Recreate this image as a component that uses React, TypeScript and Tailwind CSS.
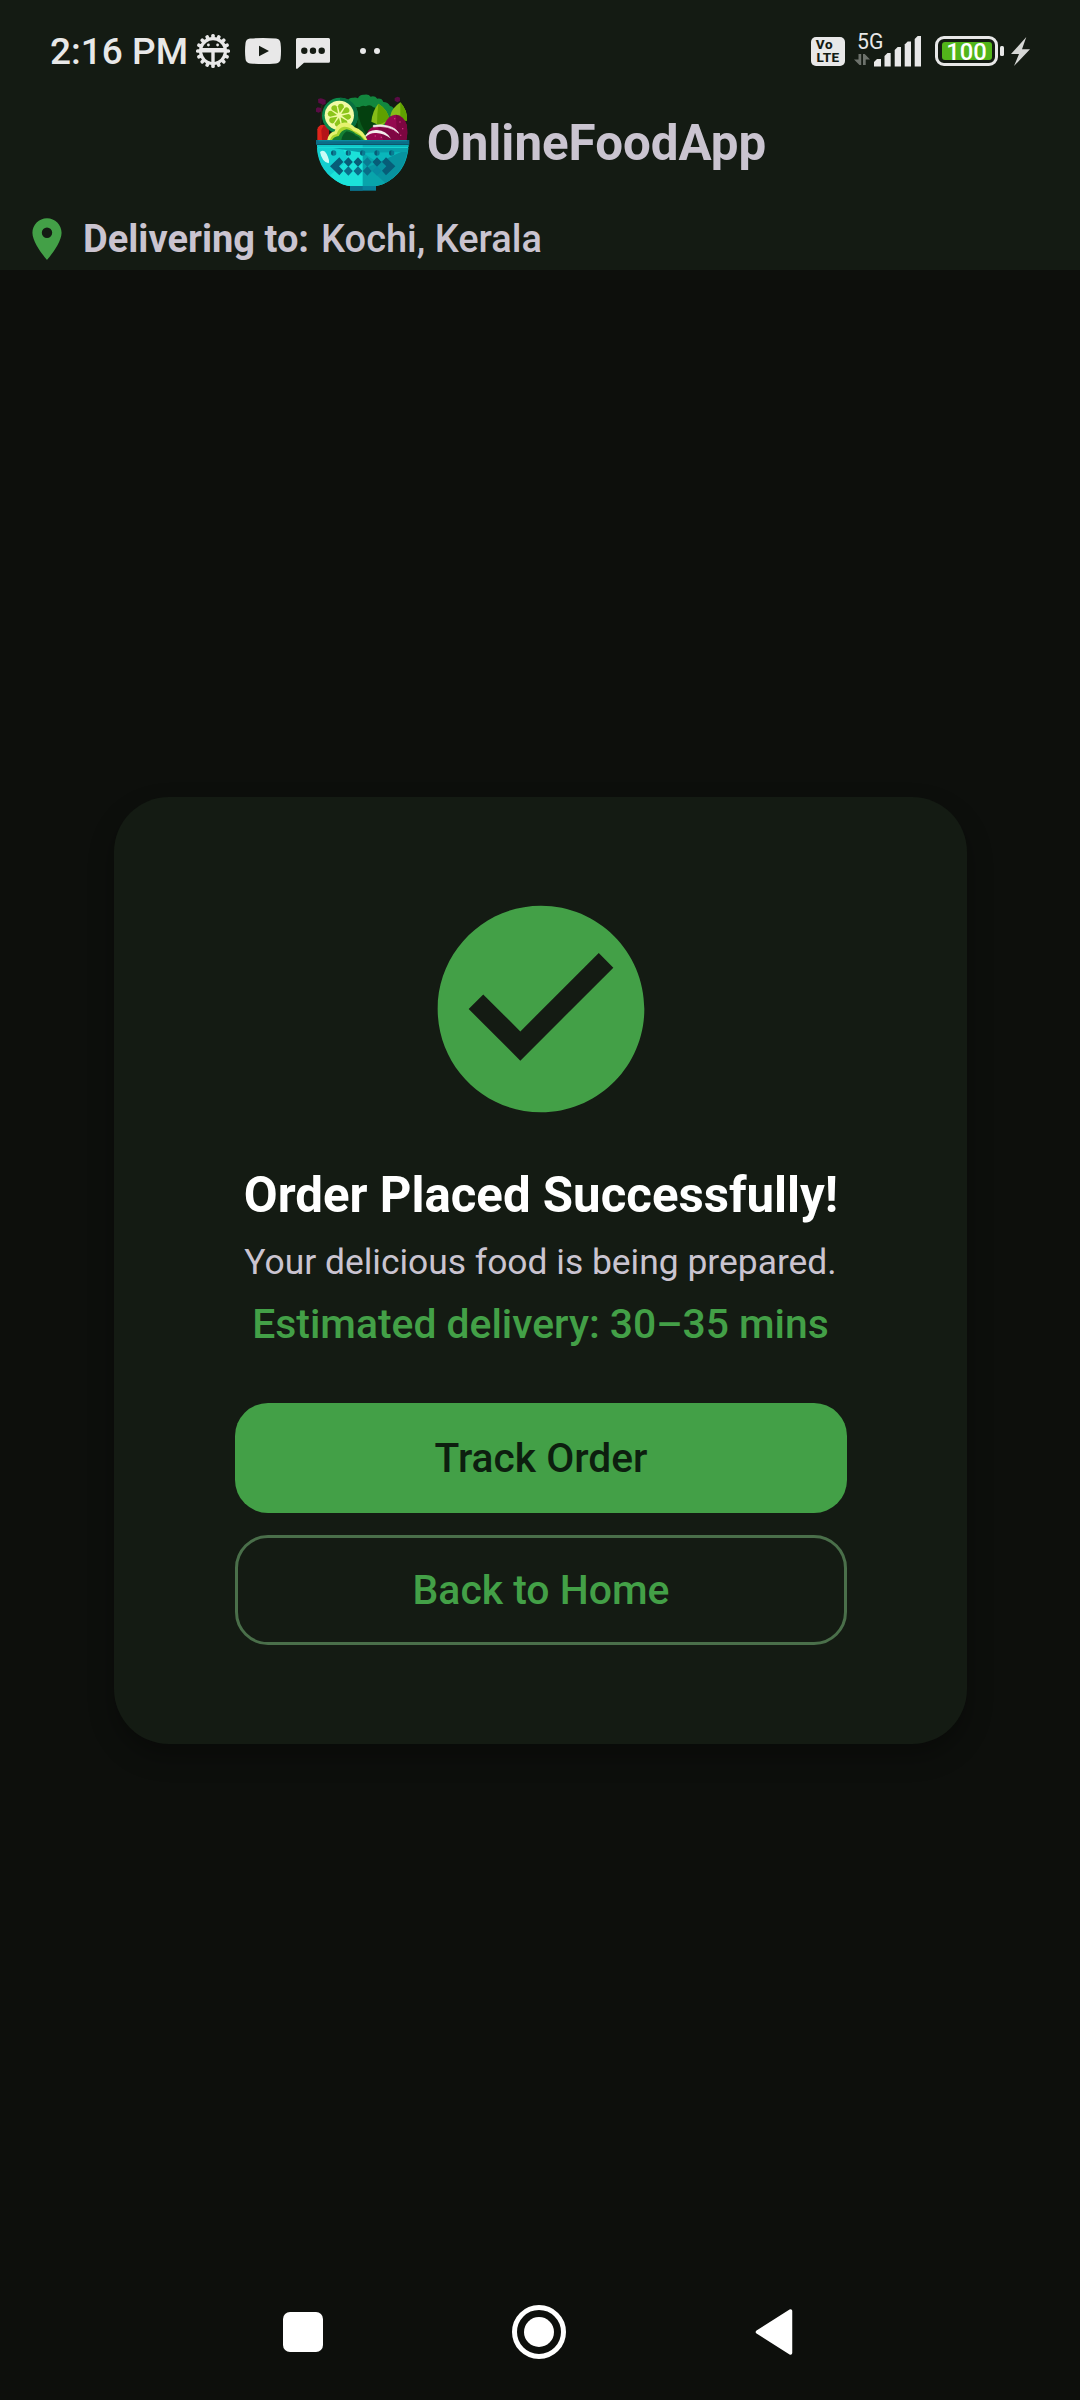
import type { ReactNode } from 'react';

const GEAR_TEETH = Array.from({ length: 16 }, (_, i) => i * 22.5);
const SIGNAL_BARS = [
  'M0 30.5V26l3-3h4v7.5z',
  'M10.5 30.5V20l3-3h3.2v13.5z',
  'M20.7 30.5V14l3-3h3.3v19.5z',
  'M30.7 30.5V8.500l3-3h3.300v25z',
  'M40.7 30.5V3l3-3h3.300v30.500z',
];

function GearIcon() {
  return (
    <svg className="h-[34px] w-[34px]" viewBox="-17 -17 34 34">
      {GEAR_TEETH.map((a) => (
        <rect key={a} x="-1.800" y="-17" width="3.600" height="6" rx="1.500" fill="#e8e8e8" transform={`rotate(${a})`} />
      ))}
      <circle r="14" fill="#e8e8e8" />
      <path d="M-10.500-3A11 11 0 0 1 10.500-3zM-10.800 1.500H-1.700V11Q-9 9.500-10.800 1.500zM10.800 1.500H1.700V11Q9 9.500 10.800 1.500z" fill="#141b13" />
      <circle cx="-4.600" cy="-6" r="1.400" fill="#e8e8e8" />
      <circle cx="4.600" cy="-6" r="1.400" fill="#e8e8e8" />
    </svg>
  );
}

function StatusBar() {
  return (
    <div className="flex h-[88px] items-start justify-between pl-[50px] pr-[50px] text-[#e8e8e8]">
      <div className="flex h-[102px] items-center">
        <span className="w-[145.500px] pt-[1px] text-[37px] leading-[44px] font-medium whitespace-nowrap">2:16 PM</span>
        <GearIcon />
        <svg className="ml-[15px] h-[26px] w-[36px]" viewBox="0 0 36 26">
          <path d="M5 .6Q18-.6 31 .6 35 1 35.500 5 36.500 13 35.500 21 35 25 31 25.400 18 26.600 5 25.400 1 25 .5 21-.5 13 .5 5 1 1 5 .6z" fill="#e8e8e8" />
          <path d="M14 7.800 24 13l-10 5.200z" fill="#141b13" />
        </svg>
        <svg className="mt-[5px] ml-[15px] h-[31px] w-[34px]" viewBox="0 0 34 31">
          <path d="M1.500 0h31Q34 0 34 1.500v21.700q0 1.500-1.500 1.500H8L1.600 30.600Q0 31.500 0 29.500V1.500Q0 0 1.500 0z" fill="#e8e8e8" />
          <circle cx="8.300" cy="12.700" r="3.200" fill="#141b13" />
          <circle cx="17" cy="12.700" r="3.200" fill="#141b13" />
          <circle cx="25.700" cy="12.700" r="3.200" fill="#141b13" />
        </svg>
        <span className="ml-[30px] h-[6px] w-[6px] rounded-full bg-[#e8e8e8]" />
        <span className="ml-[8px] h-[6px] w-[6px] rounded-full bg-[#e8e8e8]" />
      </div>
      <div className="flex h-[102px] items-center">
        <div className="flex h-[29px] w-[34px] flex-col items-center justify-center rounded-[5px] bg-[#e8e8e8] text-[#141b13]">
          <span className="-ml-[7px] text-[13.500px] leading-[11.500px] font-extrabold tracking-[0.6px]">Vo</span>
          <span className="text-[13.500px] leading-[12px] font-extrabold tracking-[0.3px]">LTE</span>
        </div>
        <div className="relative ml-[9px] h-[32px] w-[67px]">
          <span className="absolute -top-[5.500px] left-[3px] text-[21.200px] leading-[24px]">5G</span>
          <svg className="absolute top-[19px] left-0 h-[11px] w-[16px]" viewBox="0 0 16 11" fill="#6d726c">
            <path d="M4.500 0h2.700v11H5.500L0 5.500h4.500zM9 0h1.700L16 5.500h-4.300V11H9z" />
          </svg>
          <svg className="absolute top-[0.500px] left-[19.800px] h-[31px] w-[47px]" viewBox="0 0 47 31" fill="#e8e8e8">
            {SIGNAL_BARS.map((d) => (
              <path key={d} d={d} />
            ))}
          </svg>
        </div>
        <div className="ml-[14px] flex h-[30px] w-[63px] items-center justify-center rounded-[9px] border-[3px] border-[#e8e8e8]">
          <div className="flex h-[18px] w-[50px] items-center justify-center rounded-[3px] bg-[#52b51a] text-[23.800px] leading-[18px] font-medium text-white">
            <span className="relative top-[0.500px]">100</span>
          </div>
        </div>
        <span className="ml-[2px] h-[10px] w-[4px] rounded-[1.500px] bg-[#e8e8e8]" />
        <svg className="ml-[7px] h-[29px] w-[19px]" viewBox="0 0 19 29">
          <path d="M15.300 0 0 17h8L3 29 19 12.200h-8z" fill="#d6d7d5" />
        </svg>
      </div>
    </div>
  );
}

function SaladLogo() {
  return (
    <svg className="h-[97.330px] w-[94px]" viewBox="48 28 282 292">
      {/* kale */}
      <path d="M140 52q6-14 20-13 8-2 14 2 4-12 18-11 14-3 20 6 12-4 20 6 14-2 18 10 14 0 20 12 14 2 12 18l-10 84H140z" fill="#12873e" />
      <path d="M156 76q10-12 22-8 8-8 20-3 12-8 22 3 14 2 16 16l-16 80h-64z" fill="#04400f" />
      <path d="M170 80l14 40 22 44h-30z" fill="#0a5a1c" />
      {/* stray purple leaves */}
      <path d="M54 43l8-2 6 1 9 4v12l-9 3-5-4-8-2zM47 72l6-4 11 2v10l-8 4-8-3z" fill="#5a0b45" />
      <path d="M284 40l9-4 7 3v10l-8 4-8-5z" fill="#5a0b45" />
      <path d="M66 60l-4 60" stroke="#3d2417" strokeWidth="3" />
      {/* tomato */}
      <path d="M52 166v-32q4-14 16-14 14 0 18 12v34z" fill="#de241b" />
      <path d="M66 166l-2-30 8-15 14 12v33z" fill="#b41418" />
      {/* lime */}
      <circle cx="120" cy="93" r="54" fill="#0d8a4b" />
      <path d="M120 39a54 54 0 0 1 0 108z" fill="#08703f" />
      <circle cx="118" cy="92" r="44" fill="#f1faa5" />
      <g fill="#8bc51b">
        {[10, 55, 100, 145, 190, 235, 280, 325].map((a) => (
          <path key={a} d="M118 85l-9-19q0-8 9-9 9 1 9 9z" transform={`rotate(${a} 118 92)`} />
        ))}
      </g>
      {/* leaves */}
      <path d="M235 57q-18 22-21 54l30 14 24-20q-4-30-33-48z" fill="#86bd18" />
      <path d="M235 57q-4 30-4 66l37-18q-4-30-33-48z" fill="#5fa000" />
      <path d="M301 53q-26 18-30 40l20 20 30-6q2-30-20-54z" fill="#86bd18" />
      <path d="M301 53v52l20 4q2-32-20-56z" fill="#5fa000" />
      {/* beet */}
      <path d="M255 166V116q10-24 32-26 24 4 33 30 4 26-1 46z" fill="#94094f" />
      <path d="M288 90q24 4 32 30 4 26-1 46h-28z" fill="#7c0640" />
      <path d="M198 166q0-34 26-42 40-6 62 20l12 22z" fill="#96084f" />
      <path d="M232 124q40-4 62 30l2 12h-46z" fill="#7f0743" />
      <path d="M220 122q24-4 44 2 24 6 32 22-14-14-34-18-22-5-42-1z" fill="#f3ecec" stroke="#f3ecec" strokeWidth="2" />
      <path d="M195 154q12-20 36-18 28 2 42 26-22-16-44-17-18-2-32 12z" fill="#f3ecec" />
      <g fill="#cf2b7c">
        <rect x="282" y="100" width="4" height="4" />
        <rect x="298" y="110" width="4" height="4" />
        <rect x="306" y="130" width="4" height="4" />
        <rect x="300" y="150" width="4" height="4" />
        <rect x="224" y="152" width="4" height="4" />
        <rect x="242" y="156" width="4" height="4" />
      </g>
      {/* avocado */}
      <path d="M82 166q4-22 22-26 6-24 26-26 20-2 34 14 26 8 38 38z" fill="#e6f26e" />
      <path d="M90 166q4-16 20-18 6-20 22-22 18 0 28 12 22 8 36 28z" fill="#a8d42c" />
      <path d="M96 166q6-10 20-12 8-18 24-20 18 4 26 12 16 6 26 20z" fill="#158035" />
      <path d="M124 166q2-16 16-26 20 4 26 12 12 4 18 14z" fill="#075423" />
      {/* bowl */}
      <path d="M51 182h274q-4 82-75 116-22 9-62 9t-62-9Q55 264 51 182z" fill="#1be2d9" />
      <path d="M51 190h76l61 117q-40 0-62-9Q55 264 51 190z" fill="#13cfd0" />
      <path d="M90 272l98-82v117q-40 0-62-9-20-8-36-26z" fill="#1be2d9" />
      <path d="M188 190h137q-6 76-75 108-22 9-62 9z" fill="#08a4ab" />
      <path d="M324 190q-4 46-36 78L188 204z" fill="#09b7bb" />
      <path d="M324 192L204 248l52 47q58-32 68-103z" fill="#07929f" />
      <path d="M100 190h225l-1 12-136 2z" fill="#07a0aa" />
      <path d="M60 202q12-10 20 6 10 20 6 28-20-4-26-34z" fill="#c8fbf6" />
      <path d="M48 166h280v14H48z" fill="#0b6d88" />
      <path d="M55 166h266v4H55z" fill="#0a8b9e" />
      <path d="M51 181h274v7H51z" fill="#12c9cc" />
      <path d="M188 181h137v7H188z" fill="#0ab2bb" />
      {/* pattern */}
      {[101, 145, 188, 231, 275].map((x) => (
        <g key={x}>
          <path d={`M${x} 197a8 8 0 0 0 0 16z`} fill="#075d78" />
          <path d={`M${x} 197a8 8 0 0 1 0 16z`} fill="#0a7b93" />
        </g>
      ))}
      {[145, 174, 202, 231].map((x) => (
        <g key={x}>
          <path d={`M${x} 218l13.500 14-13.500 14-13.500-14z`} fill={x === 202 ? '#0a7b93' : '#075d78'} />
          <path d={`M${x} 245l13.500 14-13.500 14-13.500-14z`} fill={x === 231 ? '#078aa0' : '#096d88'} />
        </g>
      ))}
      <path d="M90 245l28-27 12 14-13 13 13 13-12 14z" fill="#075d78" />
      <path d="M286 245l-28-27-12 14 13 13-13 13 12 14z" fill="#075d78" />
      {/* foot */}
      <path d="M150 304h78v14h-78z" fill="#08809a" />
      <path d="M150 304h38v14h-38z" fill="#0b6f8a" />
    </svg>
  );
}

function Header() {
  return (
    <header className="h-[270px] bg-[#141b13]">
      <StatusBar />
      <div className="flex h-[110px] items-center justify-center gap-[17px] pl-[2px]">
        <SaladLogo />
        <h1 className="text-[49.280px] leading-[60px] font-bold whitespace-nowrap text-[#cac4d0]">OnlineFoodApp</h1>
      </div>
      <div className="flex h-[82px] items-center pl-[22px] text-[#cac4d0]">
        <svg className="h-[50px] w-[50px]" viewBox="0 0 24 24" fill="#43a047">
          <path d="M12 2C8.130 2 5 5.130 5 9c0 5.250 7 13 7 13s7-7.750 7-13c0-3.870-3.130-7-7-7zm0 9.500a2.500 2.500 0 0 1 0-5 2.500 2.500 0 0 1 0 5z" />
        </svg>
        <span className="ml-[11px] text-[38.060px] leading-[46px] font-bold whitespace-nowrap">Delivering to:</span>
        <span className="ml-[12px] text-[38px] leading-[46px] font-medium whitespace-nowrap">Kochi, Kerala</span>
      </div>
    </header>
  );
}

function ActionButton({ className, children }: { className: string; children: ReactNode }) {
  return (
    <button className={`flex h-[110px] w-full items-center justify-center rounded-[33px] pt-[2px] font-medium ${className}`}>
      {children}
    </button>
  );
}

function OrderCard() {
  return (
    <section className="flex h-[947px] w-[853px] flex-col items-center rounded-[55px] bg-[#141b13] pr-[120px] pl-[121px] pt-[88px] whitespace-nowrap shadow-[0_12px_26px_rgba(0,0,0,0.3)]">
      <svg className="h-[248px] w-[248px] shrink-0" viewBox="0 0 24 24" fill="#43a047">
        <path d="M12 2C6.480 2 2 6.480 2 12s4.480 10 10 10 10-4.480 10-10S17.520 2 12 2zm-2 15l-5-5 1.410-1.410L10 14.170l7.590-7.590L19 8l-9 9z" />
      </svg>
      <h2 className="mt-[29px] text-[49.180px] leading-[66px] font-bold text-white">Order Placed Successfully!</h2>
      <p className="mt-[8px] mr-[1px] text-[35.420px] leading-[52px] text-[#cac4d0]">Your delicious food is being prepared.</p>
      <p className="mt-[6px] mr-[1px] text-[40.850px] leading-[60px] font-medium text-[#43a047]">Estimated delivery: 30–35 mins</p>
      <div className="mt-[49px] flex w-[612px] flex-col gap-[22px]">
        <ActionButton className="bg-[#43a047] text-[40.740px] text-[#0d1f0f]">Track Order</ActionButton>
        <ActionButton className="border-[3px] border-[#4a6f4a] text-[40.900px] text-[#43a047]">Back to Home</ActionButton>
      </div>
    </section>
  );
}

function NavigationBar() {
  return (
    <nav className="flex h-[136px] items-center px-[283px]">
      <span className="h-[40px] w-[40px] rounded-[7px] bg-white" />
      <span className="ml-[189px] flex h-[54px] w-[54px] items-center justify-center rounded-full border-[5px] border-white">
        <span className="h-[30px] w-[30px] rounded-full bg-white" />
      </span>
      <svg className="ml-[189px] h-[46px] w-[38px] shrink-0" viewBox="0 0 38 46">
        <path d="M2.500 23 35.500 2v42z" fill="#fff" stroke="#fff" strokeWidth="3.500" strokeLinejoin="round" />
      </svg>
    </nav>
  );
}

export default function App() {
  return (
    <div className="flex h-[2400px] w-[1080px] flex-col overflow-hidden bg-[#0d0f0c] font-[Roboto,sans-serif]">
      <Header />
      <main className="flex flex-1 flex-col items-center pt-[527px] pl-[1px]">
        <OrderCard />
      </main>
      <NavigationBar />
    </div>
  );
}
